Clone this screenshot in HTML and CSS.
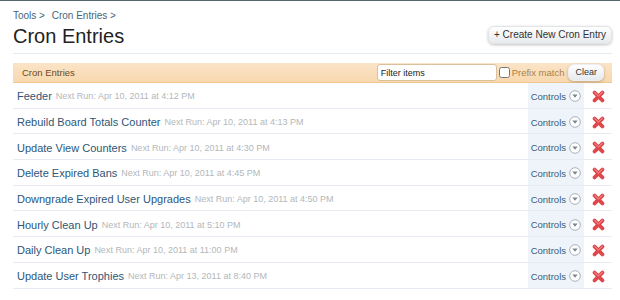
FILE: index.html
```html
<!DOCTYPE html>
<html lang="en">
<head>
    <meta charset="UTF-8">
    <title>Cron Entries</title>
    <link rel="stylesheet" href="styles.css">
</head>
<body>
    <div class="page">
        <div class="breadcrumb">
            <a href="#">Tools &gt;</a>
            <a href="#">Cron Entries &gt;</a>
        </div>
        <div class="title-bar">
            <h1>Cron Entries</h1>
            <a class="button top-button" href="#">+ Create New Cron Entry</a>
        </div>

        <div class="list">
            <div class="list-head">
                <span class="list-title">Cron Entries</span>
                <div class="filter">
                    <input type="text" class="filter-input" value="Filter items">
                    <label class="prefix"><input type="checkbox"> Prefix match</label>
                    <a class="button clear-btn" href="#">Clear</a>
                </div>
            </div>
            <div id="rows"></div>
        </div>
    </div>

    <script>
        var entries = [
            ["Feeder", "Apr 10, 2011 at 4:12 PM"],
            ["Rebuild Board Totals Counter", "Apr 10, 2011 at 4:13 PM"],
            ["Update View Counters", "Apr 10, 2011 at 4:30 PM"],
            ["Delete Expired Bans", "Apr 10, 2011 at 4:45 PM"],
            ["Downgrade Expired User Upgrades", "Apr 10, 2011 at 4:50 PM"],
            ["Hourly Clean Up", "Apr 10, 2011 at 5:10 PM"],
            ["Daily Clean Up", "Apr 10, 2011 at 11:00 PM"],
            ["Update User Trophies", "Apr 13, 2011 at 8:40 PM"]
        ];

        var html = "";
        entries.forEach(function (e) {
            html += '<div class="row">' +
                '<div class="name"><a href="#">' + e[0] + '</a> <span class="next-run">Next Run: ' + e[1] + '</span></div>' +
                '<div class="controls"><span>Controls</span>' +
                '<svg width="12" height="12" viewBox="0 0 12 12"><circle cx="6" cy="6" r="5.3" fill="#fff" stroke="#a9b1b8"/><path d="M3.3 4.6 L8.7 4.6 L6 7.8 Z" fill="#7d868e"/></svg></div>' +
                '<div class="delete"><svg width="13" height="13" viewBox="0 0 13 13">' +
                '<path d="M2.6 2.6 L10.4 10.4 M10.4 2.6 L2.6 10.4" stroke="#e0474b" stroke-width="3.8" stroke-linecap="round"/>' +
                '<path d="M2.6 2.3 L6.5 6 L10.4 2.3" stroke="#f7a0a0" stroke-width="1" fill="none" stroke-linecap="round"/>' +
                '</svg></div>' +
                '</div>';
        });
        document.getElementById("rows").innerHTML = html;
    </script>
</body>
</html>
```

FILE: styles.css
```css
body {
    margin: 0;
    background: #fff;
    font-family: "Liberation Sans", Arial, sans-serif;
    color: #333;
    border-top: 1px solid #56666f;
}
a {
    text-decoration: none;
}
.page {
    padding: 0 8px 0 13px;
}
.breadcrumb {
    padding-top: 9px;
    font-size: 10px;
    height: 14px;
}
.breadcrumb a {
    color: #46657c;
    margin-right: 4px;
}
.title-bar {
    display: flex;
    justify-content: space-between;
    align-items: flex-start;
    border-bottom: 1px solid #e3ebf1;
    height: 29px;
}
.title-bar h1 {
    margin: 0;
    font-size: 20px;
    font-weight: normal;
    color: #222;
    line-height: 25px;
}
.button {
    display: inline-block;
    color: #333;
    font-size: 10px;
    background: linear-gradient(#fff, #e7eaee);
    border: 1px solid #e2e4e8;
    border-radius: 6px;
    box-shadow: 0 1px 3px rgba(0, 0, 0, 0.25);
}
.top-button {
    margin-top: 2px;
    padding: 3px 5px;
    line-height: 10px;
}
.list {
    margin-top: 9px;
}
.list-head {
    display: flex;
    justify-content: space-between;
    align-items: center;
    height: 19px;
    background: linear-gradient(#fbe4c7, #f8d8ae);
    border-bottom: 1px solid #f0c791;
}
.list-title {
    font-size: 9.5px;
    color: #6b4a1f;
    padding-left: 9px;
}
.filter {
    display: flex;
    align-items: center;
    padding-right: 8px;
}
.filter-input {
    width: 112px;
    height: 11px;
    padding: 2px 3px;
    font-family: inherit;
    font-size: 9px;
    color: #222;
    border: 1px solid #d9c19c;
    border-radius: 3px;
    margin: 0 2px 0 0;
}
.prefix {
    display: flex;
    align-items: center;
    font-size: 9.5px;
    color: #a8824a;
}
.prefix input {
    width: 11px;
    height: 11px;
    margin: 0 2px 0 0;
}
.clear-btn {
    margin-left: 4px;
    padding: 2px 6px;
    font-size: 9px;
    line-height: 11px;
    border-color: #eee;
}
.row {
    display: flex;
    height: 24.7px;
    border-bottom: 1px solid #e6ecf1;
}
.name {
    flex: 1;
    display: flex;
    align-items: center;
    padding: 2px 0 0 4px;
    white-space: nowrap;
    font-size: 11px;
}
.name a {
    color: #2e5677;
    margin-right: 4px;
}
.next-run {
    color: #b3b7bb;
    font-size: 9px;
}
.controls {
    width: 57px;
    background: #eef4f9;
    display: flex;
    align-items: center;
    justify-content: flex-end;
    gap: 3px;
    padding: 2px 3px 0 0;
    box-sizing: border-box;
    font-size: 9.5px;
    color: #3b5d77;
    border-right: 1px solid #fff;
}
.delete {
    width: 27px;
    padding-top: 2px;
    display: flex;
    align-items: center;
    justify-content: center;
}
```
